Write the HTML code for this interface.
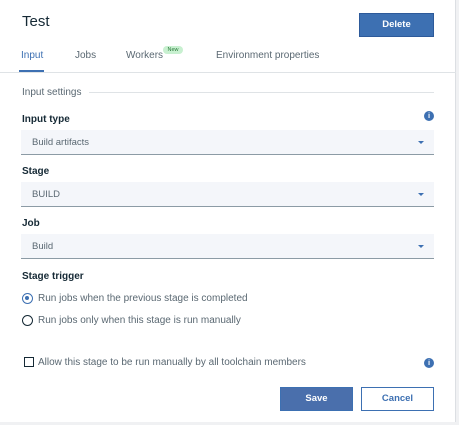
<!DOCTYPE html>
<html><head><style>
*{box-sizing:border-box;margin:0;padding:0}
body{width:459px;height:425px;background:#f0f1f3;font-family:"Liberation Sans",sans-serif;position:relative;overflow:hidden}
.p{position:absolute;left:0;top:0;width:456px;height:422px;background:#fff;border-right:1px solid #dcdfe3}
.a{position:absolute}
.t{font-size:10px;color:#5a6872}
.lbl{font-size:10px;font-weight:bold;color:#152935}
.sel{position:absolute;left:21px;width:413px;height:25px;background:#f4f6fa;border-bottom:1px solid #8c9ba5;font-size:9.5px;color:#5a6872;padding:7px 0 0 11px}
.sel:after{content:"";position:absolute;right:10px;top:11px;border:3px solid transparent;border-top:3px solid #3d70b2}
.btn{position:absolute;height:24px;font-size:9.5px;font-weight:bold;text-align:center;line-height:22px}
.info{position:absolute;width:10px;height:10px;border-radius:50%;background:#3d70b2;color:#fff;font-size:7.5px;font-weight:bold;text-align:center;line-height:10px}
</style></head><body>
<div class="p">
<div class="a" style="left:22px;top:13px;font-size:15px;color:#152935">Test</div>
<div class="btn" style="left:359px;top:13px;width:75px;background:#3d70b2;border:1px solid #2d5a9a;color:#fff">Delete</div>
<div class="a t" style="left:21px;top:50px;color:#3d70b2">Input</div>
<div class="a" style="left:19px;top:70px;width:25px;height:2px;background:#3d70b2"></div>
<div class="a t" style="left:75px;top:50px">Jobs</div>
<div class="a t" style="left:126px;top:50px">Workers</div>
<div class="a" style="left:163px;top:46px;width:20px;height:8px;border-radius:4px;background:#c8f0d0;font-size:5.5px;color:#2a7a3a;text-align:center;line-height:8px">New</div>
<div class="a t" style="left:216px;top:50px">Environment properties</div>
<div class="a" style="left:0;top:72px;width:456px;height:1px;background:#dfe3e6"></div>
<div class="a t" style="left:22px;top:87px">Input settings</div>
<div class="a" style="left:89px;top:92px;width:345px;height:1px;background:#dfe3e6"></div>
<div class="a lbl" style="left:22px;top:114px">Input type</div>
<div class="info" style="left:424px;top:111px">i</div>
<div class="sel" style="top:130px">Build artifacts</div>
<div class="a lbl" style="left:22px;top:166px">Stage</div>
<div class="sel" style="top:182px">BUILD</div>
<div class="a lbl" style="left:22px;top:218px">Job</div>
<div class="sel" style="top:234px">Build</div>
<div class="a lbl" style="left:22px;top:271px">Stage trigger</div>
<div class="a" style="left:22px;top:293px;width:11px;height:11px;border:1.5px solid #3d70b2;border-radius:50%"><div style="margin:2px;width:4px;height:4px;border-radius:50%;background:#3d70b2"></div></div>
<div class="a t" style="left:38px;top:293px">Run jobs when the previous stage is completed</div>
<div class="a" style="left:22px;top:315px;width:11px;height:11px;border:1.5px solid #152935;border-radius:50%"></div>
<div class="a t" style="left:38px;top:315px">Run jobs only when this stage is run manually</div>
<div class="a" style="left:24px;top:357px;width:10px;height:10px;border:1.5px solid #152935"></div>
<div class="a t" style="left:38px;top:357px">Allow this stage to be run manually by all toolchain members</div>
<div class="info" style="left:424px;top:358px">i</div>
<div class="btn" style="left:280px;top:387px;width:73px;background:#4a6fac;border:1px solid #3d70b2;color:#fff">Save</div>
<div class="btn" style="left:361px;top:387px;width:73px;background:#fff;border:1px solid #3d70b2;color:#3d70b2">Cancel</div>
</div>
</body></html>
